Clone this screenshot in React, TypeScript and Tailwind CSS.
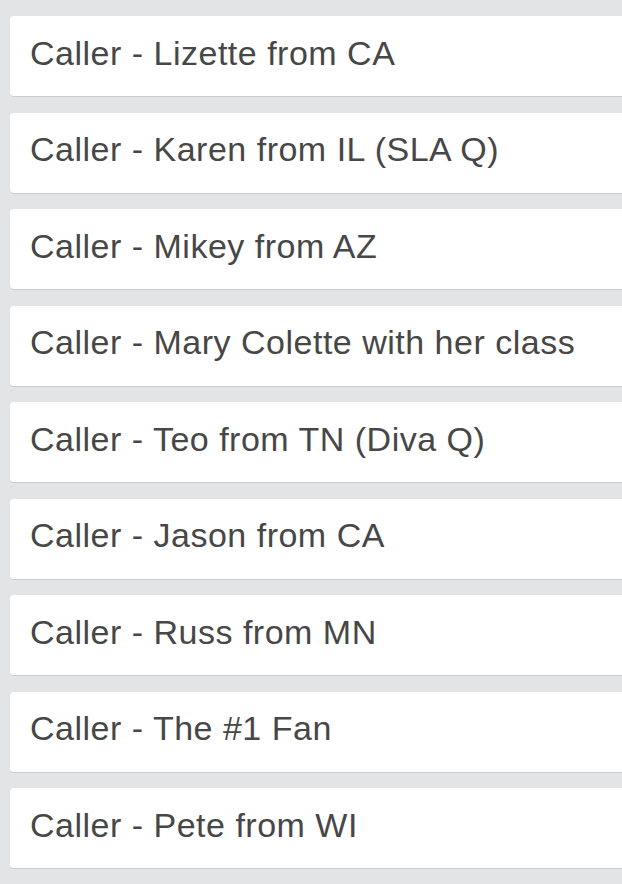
import React from 'react';

const callers = [
  'Caller - Lizette from CA',
  'Caller - Karen from IL (SLA Q)',
  'Caller - Mikey from AZ',
  'Caller - Mary Colette with her class',
  'Caller - Teo from TN (Diva Q)',
  'Caller - Jason from CA',
  'Caller - Russ from MN',
  'Caller - The #1 Fan',
  'Caller - Pete from WI',
];

export default function App() {
  return (
    <div className="min-h-[884px] w-[622px] overflow-hidden bg-[#e3e4e6] pt-4 pl-[10px]">
      <div className="flex w-[640px] flex-col gap-[15.5px]">
        {callers.map((name) => (
          <div
            key={name}
            className="flex h-[81px] items-center rounded-[4px] border-b border-[#cbcbcd] bg-white pb-[6px] pl-5 text-[34px] tracking-[0.5px] text-[#474747]"
            style={{ fontFamily: '"Liberation Sans", Arial, sans-serif' }}
          >
            {name}
          </div>
        ))}
      </div>
    </div>
  );
}
